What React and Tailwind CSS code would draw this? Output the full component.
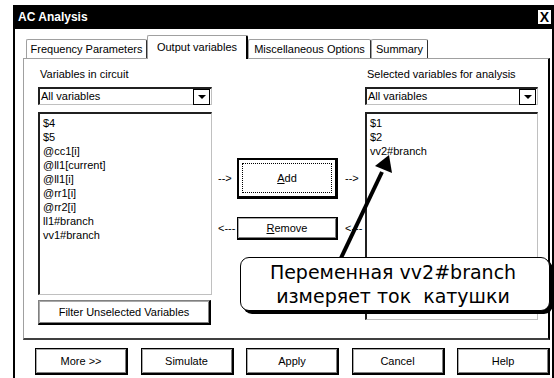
import React from 'react';

// AC Analysis dialog – "Output variables" tab, with an annotation callout

const leftVars = ['$4', '$5', '@cc1[i]', '@ll1[current]', '@ll1[i]', '@rr1[i]', '@rr2[i]', 'll1#branch', 'vv1#branch'];
const rightVars = ['$1', '$2', 'vv2#branch'];

const Tab = ({ label, width, active }) =>
  active ? (
    <div
      className={`${width} h-[24px] -mb-px relative z-10 bg-white border-t border-l border-[#a0a0a0] border-r-2 border-r-black rounded-t-[2px] flex items-start justify-center pt-[3px]`}
    >
      {label}
    </div>
  ) : (
    <div
      className={`${width} h-[19px] border-t border-l border-[#a0a0a0] border-r border-r-[#303030] rounded-t-[2px] flex items-center justify-center`}
    >
      {label}
    </div>
  );

const Combo = () => (
  <div className="h-[18px] flex items-center border-t-2 border-l-2 border-t-[#202020] border-l-[#202020] border-b border-r border-b-[#c0c0c0] border-r-[#c0c0c0] bg-white">
    <span className="flex-1 pl-[1px] leading-none">All variables</span>
    <div className="w-[17px] h-[16px] border border-black flex items-center justify-center mr-px">
      <div className="w-0 h-0 border-l-[4px] border-r-[4px] border-t-[4px] border-l-transparent border-r-transparent border-t-black" />
    </div>
  </div>
);

const ListBox = ({ items, height }) => (
  <div
    className={`${height} border-t-2 border-l-2 border-t-[#202020] border-l-[#202020] border-b border-r border-b-[#c0c0c0] border-r-[#c0c0c0] bg-white pt-[2px] pl-[3px]`}
  >
    {items.map(v => (
      <div key={v} className="h-[14px] leading-[14px]">{v}</div>
    ))}
  </div>
);

const Button = ({ children, className = '' }) => (
  <button
    className={`flex items-center justify-center bg-white border border-black border-r-2 border-b-2 shadow-[inset_1px_1px_0_#a8a8a8,inset_-1px_-1px_0_#808080] leading-none ${className}`}
  >
    {children}
  </button>
);

export default function App() {
  return (
    <div className="w-[554px] h-[378px] bg-white overflow-hidden relative text-[11px] text-black font-['Liberation_Sans',Arial,sans-serif]">
      {/* Window frame */}
      <div className="ml-[13px] mt-[5px] w-[541px] h-[373px] border-l-2 border-r-2 border-black flex flex-col">
        {/* Title bar */}
        <div className="h-[24px] bg-black flex items-center justify-between pl-[3px] pr-0">
          <span className="text-white font-bold text-[12px]">AC Analysis</span>
          <div className="w-[15px] h-[16px] bg-white border border-black flex items-center justify-center font-bold text-[14px] leading-none">
            X
          </div>
        </div>

        {/* Tabs */}
        <div className="mt-[6px] ml-[8px] flex items-end pl-[3px] h-[23px]">
          <Tab label="Frequency Parameters" width="w-[121px]" />
          <Tab label="Output variables" width="w-[101px]" active />
          <Tab label="Miscellaneous Options" width="w-[123px]" />
          <Tab label="Summary" width="w-[57px]" />
        </div>

        {/* Tab panel */}
        <div className="ml-[8px] w-[527px] h-[282px] border-t border-l border-[#a0a0a0] border-r-2 border-b-2 border-r-black border-b-[#404040] flex pl-[14px]">
          {/* Left column */}
          <div className="w-[174px] flex flex-col">
            <div className="mt-[8px] h-[14px] leading-[14px] pl-[2px]">Variables in circuit</div>
            <div className="mt-[6px]"><Combo /></div>
            <div className="mt-[7px]"><ListBox items={leftVars} height="h-[183px]" /></div>
            <Button className="mt-[5px] h-[25px] w-[173px] border-t-[#808080] border-l-[#808080]">Filter Unselected Variables</Button>
          </div>

          {/* Middle column */}
          <div className="w-[153px] flex flex-col pl-[6px]">
            <div className="mt-[99px] flex items-center h-[41px]">
              <span className="w-[15px] whitespace-nowrap">--&gt;</span>
              <button className="ml-[4px] w-[101px] h-[41px] bg-white border-2 border-black border-r-[3px] border-b-[3px] p-[3px]">
                <div className="w-full h-full border border-dotted border-black flex items-center justify-center">
                  <span><span className="underline">A</span>dd</span>
                </div>
              </button>
              <span className="ml-[7px] whitespace-nowrap">--&gt;</span>
            </div>
            <div className="mt-[18px] flex items-center h-[23px]">
              <span className="w-[15px] whitespace-nowrap">&lt;---</span>
              <Button className="ml-[4px] w-[101px] h-[23px]">
                <span><span className="underline">R</span>emove</span>
              </Button>
              <span className="ml-[7px] whitespace-nowrap">&lt;---</span>
            </div>
          </div>

          {/* Right column */}
          <div className="w-[173px] flex flex-col">
            <div className="mt-[8px] h-[14px] leading-[14px] pl-[2px]">Selected variables for analysis</div>
            <div className="mt-[6px]"><Combo /></div>
            <div className="mt-[7px]"><ListBox items={rightVars} height="h-[208px]" /></div>
          </div>
        </div>

        {/* Bottom buttons */}
        <div className="mt-[8px] ml-[20px] flex gap-[12.5px]">
          {['More >>', 'Simulate', 'Apply', 'Cancel', 'Help'].map(b => (
            <Button key={b} className="w-[93px] h-[27px]">{b}</Button>
          ))}
        </div>
      </div>

      {/* Annotation arrow */}
      <svg className="absolute left-0 top-0 pointer-events-none" width="554" height="378">
        <line x1="341" y1="258" x2="382" y2="172" stroke="black" strokeWidth="4" />
        <polygon points="389,155 375,166 392,173" fill="black" />
      </svg>

      {/* Callout */}
      <div className="absolute left-[240px] top-[257px] w-[310px] h-[54px] bg-white border-[1.5px] border-black rounded-[9px] shadow-[3px_3px_0_#000] flex flex-col items-center justify-center text-[19px] leading-[24px] font-['DejaVu_Sans',sans-serif] pr-[4px]">
        <div>Переменная vv2#branch</div>
        <div className="whitespace-pre">измеряет ток  катушки</div>
      </div>
    </div>
  );
}
